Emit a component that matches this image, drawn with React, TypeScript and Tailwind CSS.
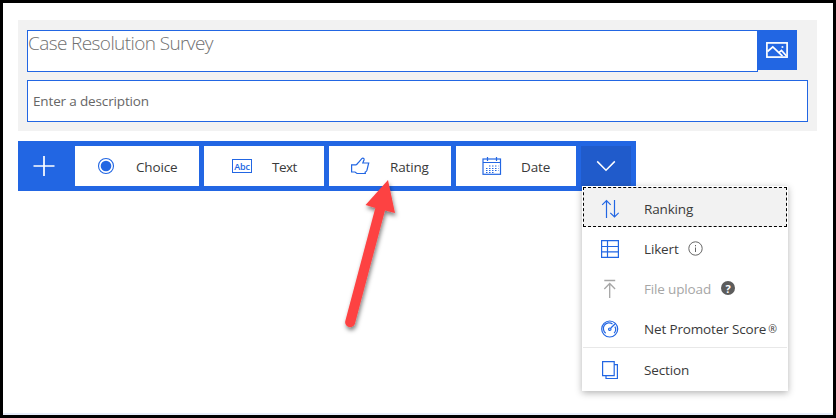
import type { ReactNode } from "react";

const stroke = { fill: "none", stroke: "#2266e3", strokeWidth: 1.2 } as const;

const ImageIcon = () => (
  <svg width="22" height="16" viewBox="0 0 22 16" fill="none" stroke="#fff" strokeWidth="1.7">
    <rect x="0.9" y="0.9" width="20.2" height="14.2" />
    <path d="M1.500 9.500 6.800 4.800l9.700 9.400M12.500 10.800l3-2.400L20.500 14" />
    <path d="M15.600 5h1.700" />
  </svg>
);

const PlusIcon = () => (
  <svg width="22" height="22" viewBox="0 0 22 22" fill="none" stroke="#fff" strokeWidth="1.700">
    <path d="M11 1v20M0.500 11h21" />
  </svg>
);

const RadioIcon = () => (
  <svg width="18" height="18" viewBox="0 0 18 18">
    <circle cx="9" cy="9" r="7.500" {...stroke} strokeWidth="1.100" />
    <circle cx="9" cy="9" r="5.300" fill="#2266e3" />
  </svg>
);

const AbcIcon = () => (
  <span className="flex h-[14px] w-5 items-center justify-center border border-[#2266e3] text-[9px] leading-none font-semibold text-[#2266e3]">
    Abc
  </span>
);

const ThumbIcon = () => (
  <svg width="20" height="18" viewBox="0 0 20 18" {...stroke}>
    <path d="M1.600 7.800h4.400c1-.2 1.700-1.300 2.400-2.300L11.800 1.700c1-1 2.600-.3 2.300 1L12.800 6h5.900l-1.800 7.400c-.3 1-1 1.500-1.800 1.800l.2 1.100-8.300.2-2-1.500H1.600z" />
  </svg>
);

const CalendarIcon = () => (
  <svg width="20" height="18" viewBox="0 0 20 18" {...stroke}>
    <rect x="1" y="2" width="17.500" height="15.300" />
    <path d="M1 5.500h17.500M5.500 0v4M14.500 0v4" />
    <path d="M7 9h9.500M4 11.500h12.500M4 13.500h12.500M4 15.500h9" strokeDasharray="1.500 1.500" strokeWidth="1.100" />
  </svg>
);

const ChevronIcon = () => (
  <svg width="20" height="12" viewBox="0 0 20 12" fill="none" stroke="#fff" strokeWidth="1.500">
    <path d="M1.200 1.400 10 10.200l8.800-8.800" />
  </svg>
);

const SortIcon = () => (
  <svg width="18" height="20" viewBox="0 0 18 20" {...stroke}>
    <path d="M5.500 19V1.500M1.200 5.800l4.300-4.300 4.200 4.300M13.500 1v17M9.300 13.800l4.200 4.200 4.200-4.200" />
  </svg>
);

const GridIcon = () => (
  <svg width="18" height="18" viewBox="0 0 18 18" {...stroke}>
    <path d="M.6.600h16.800v16.800H.6zM6.500.600v16.800M.6 6.500h16.800M.6 11.800h16.800" />
  </svg>
);

const UploadIcon = () => (
  <svg width="18" height="20" viewBox="0 0 18 20" fill="none" stroke="#a6a6a6" strokeWidth="1.300">
    <path d="M3.300 1.500h10.900M8.700 19V4.500M3.300 10l5.400-5.500 5.400 5.500" />
  </svg>
);

const GaugeIcon = () => (
  <svg width="18" height="18" viewBox="0 0 18 18" {...stroke}>
    <circle cx="8.700" cy="9" r="8" />
    <path d="M4.700 13.200A5.700 5.700 0 0 1 11.500 4M13.900 6.600a5.700 5.700 0 0 1-.8 6.600M9.800 8l4.200-4" />
    <circle cx="8.800" cy="9.200" r="1.200" />
  </svg>
);

const PagesIcon = () => (
  <svg width="18" height="20" viewBox="0 0 18 20" {...stroke}>
    <path d="M1.600 1.600h11.600v14H1.600zM13.200 4.600h3.200v13.900H5v-2.900" />
  </svg>
);

const InfoIcon = () => (
  <svg width="15" height="15" viewBox="0 0 15 15" fill="none" stroke="#666" strokeWidth="1">
    <circle cx="7.500" cy="7.500" r="6.700" />
    <path d="M7.500 6.500V11M7.500 4v1.300" />
  </svg>
);

const HelpIcon = () => (
  <span className="flex size-[14px] items-center justify-center rounded-full bg-[#5c5c5c] text-[11px] leading-none font-bold text-white">
    ?
  </span>
);

function Tool({ width, icon, iconBox, label }: { width: string; icon: ReactNode; iconBox: string; label: ReactNode }) {
  return (
    <button className={`flex h-10 items-center bg-white ${width}`}>
      <span className={`flex shrink-0 ${iconBox}`}>{icon}</span>
      <span className="pt-[2px]">{label}</span>
    </button>
  );
}

function MenuItem({ icon, children, className }: { icon: ReactNode; children: ReactNode; className: string }) {
  return (
    <li className={`flex items-center ${className}`}>
      <span className="flex w-[43px] shrink-0">{icon}</span>
      {children}
    </li>
  );
}

export default function App() {
  return (
    <main className="relative h-[418px] w-[836px] overflow-hidden border-[3px] border-black bg-white font-['Open_Sans','Noto_Sans',sans-serif] text-[13.5px] leading-5 tracking-[-0.15px] text-[#3a3a3a]">
      <section className="mt-[17px] ml-[15px] h-[111px] w-[799px] bg-[#f2f2f2] pt-[10px] pl-[9px]">
        <div className="flex">
          <div className="h-[42px] w-[731px] border border-[#2266e3] bg-white text-[19px] leading-[24px] font-light tracking-[-0.6px] text-[#707070]">
            Case Resolution Survey
          </div>
          <button className="-ml-px flex size-10 items-center justify-center bg-[#2266e3]">
            <ImageIcon />
          </button>
        </div>
        <div className="mt-2 flex h-[42px] w-[781px] items-center border border-[#2266e3] bg-white pl-[5px] text-[#666]">
          Enter a description
        </div>
      </section>

      <nav className="mt-[10px] ml-[15px] flex h-[50px] w-[618px] gap-[5px] bg-[#2266e3] py-[5px]">
        <button className="flex h-10 w-[52px] items-center justify-center">
          <PlusIcon />
        </button>
        <Tool width="w-[124px]" iconBox="w-[39px] ml-[22px]" icon={<RadioIcon />} label="Choice" />
        <Tool width="w-[120px]" iconBox="w-[40px] ml-[28px]" icon={<AbcIcon />} label={<span className="tracking-[-0.5px]">Text</span>} />
        <Tool width="w-[122px]" iconBox="w-[40px] ml-[21px]" icon={<ThumbIcon />} label="Rating" />
        <Tool width="w-[120px]" iconBox="w-[39px] ml-[26px]" icon={<CalendarIcon />} label="Date" />
        <button className="flex h-10 w-[50px] items-center justify-center bg-[#205bcb]">
          <ChevronIcon />
        </button>
      </nav>

      <ul className="absolute top-[183px] left-[579px] h-[205px] w-[206px] bg-white p-px shadow-[0_2px_7px_rgba(0,0,0,0.3)]">
        <MenuItem icon={<SortIcon />} className="h-10 border border-dashed border-black bg-[#f2f2f2] pt-1 pl-[17px]">
          Ranking
        </MenuItem>
        <MenuItem icon={<GridIcon />} className="h-10 pt-1 pl-[18px]">
          Likert<span className="-mt-[2px] ml-[9px]"><InfoIcon /></span>
        </MenuItem>
        <MenuItem icon={<UploadIcon />} className="h-10 pt-1 pl-[18px] text-[#a6a6a6]">
          File upload<span className="-mt-[2px] ml-[10px]"><HelpIcon /></span>
        </MenuItem>
        <MenuItem icon={<GaugeIcon />} className="h-10 pt-1 pl-[18px]">
          Net Promoter Score<span className="ml-[2px] text-[10.5px]">®</span>
        </MenuItem>
        <MenuItem icon={<PagesIcon />} className="h-[44px] border-t border-[#e8e8e8] pt-px pl-[18px]">
          Section
        </MenuItem>
      </ul>

      <svg className="absolute top-[167px] left-[327px]" width="90" height="170" viewBox="330 170 90 170">
        <defs>
          <filter id="arrowShadow" x="-30%" y="-10%" width="160%" height="125%">
            <feDropShadow dx="1" dy="3" stdDeviation="2" floodColor="#000" floodOpacity="0.5" />
          </filter>
        </defs>
        <path
          d="M388 180 395 213 385 210.500 355 323.500A5 5 0 0 1 345.300 321L375.300 208 365.500 205z"
          fill="#fd4343"
          filter="url(#arrowShadow)"
        />
      </svg>
      <div className="absolute bottom-0 left-0 h-[2px] w-full bg-[#e7eefb]" />
    </main>
  );
}
